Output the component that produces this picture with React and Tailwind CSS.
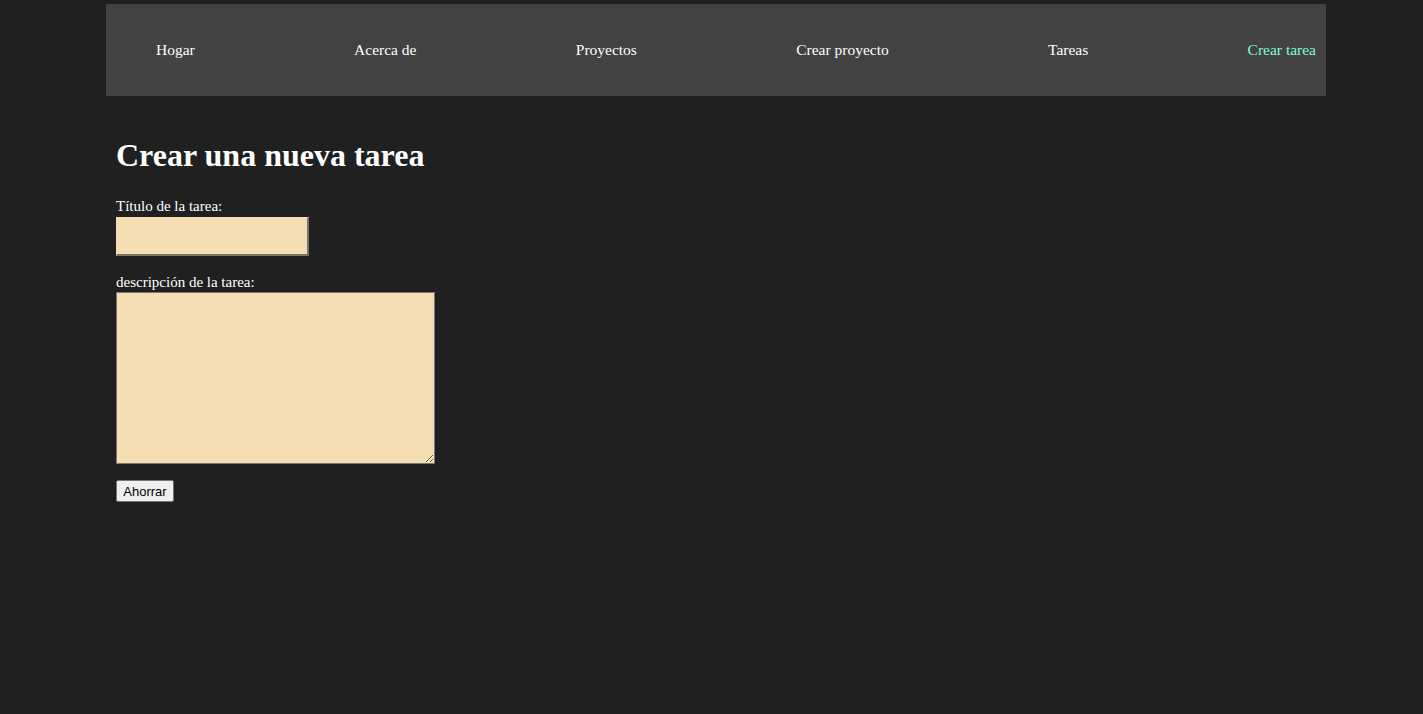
export default function App() {
  const items = ["Hogar", "Acerca de", "Proyectos", "Crear proyecto", "Tareas", "Crear tarea"];
  return (
    <div className="min-h-[714px] w-full bg-[#202020] pt-[4px] text-white font-['Liberation_Serif',serif] overflow-hidden">
      <nav className="ml-[106px] w-[1220px] h-[92px] bg-[#424242] flex items-center justify-between pl-[50px] pr-[10px]">
        {items.map((it) => (
          <a
            key={it}
            href="#"
            className={`text-[15.5px] leading-[18px] ${it === "Crear tarea" ? "text-[#7fffd4]" : "text-white"}`}
          >
            {it}
          </a>
        ))}
      </nav>
      <main className="ml-[116px]">
        <h1 className="mt-[42px] text-[32px] font-bold leading-[35px]">Crear una nueva tarea</h1>
        <form onSubmit={(e) => e.preventDefault()}>
          <label className="block mt-[24px] text-[15px] leading-[18px]">Título de la tarea:</label>
          <input
            type="text"
            className="block mt-[2px] w-[193px] h-[39px] bg-[#f5deb3] border-t border-l border-t-[#f5deb3] border-l-[#f5deb3] border-r-2 border-b-2 border-r-[#7a7468] border-b-[#7a7468] outline-none text-black"
          />
          <label className="block mt-[17px] text-[15px] leading-[18px]">descripción de la tarea:</label>
          <textarea className="block mt-[1px] w-[319px] h-[172px] bg-[#f5deb3] border border-[#767676] outline-none text-black" />
          <button
            type="submit"
            className="block mt-[16px] w-[58px] h-[22px] bg-[#efefef] border border-[#767676] rounded-[2px] text-black text-[13px] font-['Liberation_Sans',sans-serif] leading-[20px] pt-[1px]"
          >
            Ahorrar
          </button>
        </form>
      </main>
    </div>
  );
}
